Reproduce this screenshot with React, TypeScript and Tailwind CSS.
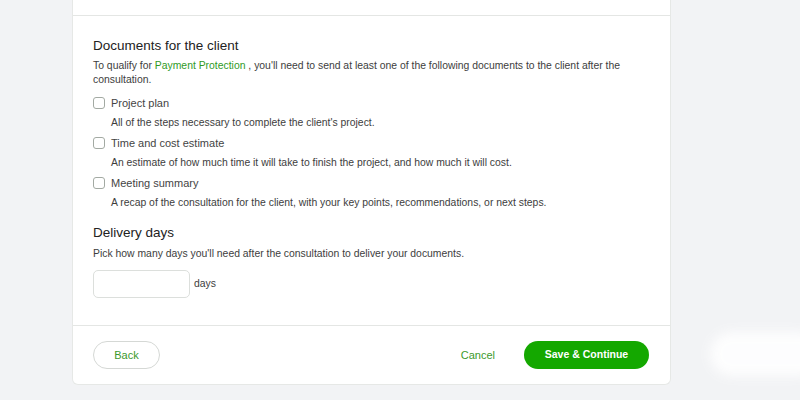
import React from "react";

const font = { fontFamily: '"Liberation Sans", Arial, sans-serif' };

function Check() {
  return <span className="w-[12px] h-[12px] rounded-[3px] border border-[#a3aaa3] bg-white shrink-0" />;
}

function Item({ title, desc }: { title: string; desc: string }) {
  return (
    <div className="flex flex-col">
      <div className="flex items-center gap-[6px] h-[20px]">
        <Check />
        <span className="text-[11px] text-[#444]">{title}</span>
      </div>
      <div className="pl-[18px] text-[10.4px] text-[#3d3d3d] h-[20px] flex items-center">{desc}</div>
    </div>
  );
}

export default function App() {
  return (
    <div className="relative w-[800px] h-[400px] bg-[#f2f3f5] overflow-hidden" style={font}>
      <div className="absolute right-[-20px] top-[332px] w-[110px] h-[44px] rounded-full bg-white blur-[6px] opacity-90" />
      <div className="ml-[72px] w-[599px] h-[385px] bg-white border-x border-b border-[#e6e8e6] rounded-b-[6px] flex flex-col">
        <div className="h-[16px] border-b border-[#e4e6e4]" />
        <div className="pl-[20px] pr-[21px] pt-[21px] h-[310px] border-b border-[#e4e6e4]">
          <h2 className="text-[13.5px] text-[#222] leading-[18px]">Documents for the client</h2>
          <p className="mt-[4px] text-[10.4px] leading-[14px] text-[#3d3d3d]">
            To qualify for <span className="text-[#2f9a1f]">Payment Protection</span> , you'll need to send at least one of the following documents to the client after the consultation.
          </p>
          <div className="mt-[6px] flex flex-col">
            <Item title="Project plan" desc="All of the steps necessary to complete the client's project." />
            <Item title="Time and cost estimate" desc="An estimate of how much time it will take to finish the project, and how much it will cost." />
            <Item title="Meeting summary" desc="A recap of the consultation for the client, with your key points, recommendations, or next steps." />
          </div>
          <h2 className="mt-[11px] text-[13.5px] text-[#222] leading-[18px]">Delivery days</h2>
          <p className="mt-[5px] text-[10.4px] leading-[14px] text-[#3d3d3d]">Pick how many days you'll need after the consultation to deliver your documents.</p>
          <div className="mt-[9px] flex items-center gap-[4px]">
            <div className="w-[97px] h-[28px] border border-[#dcdfdc] rounded-[5px]" />
            <span className="text-[10.4px] text-[#3d3d3d]">days</span>
          </div>
        </div>
        <div className="flex-1 flex items-center pl-[20px] pr-[21px]">
          <button className="w-[67px] h-[28px] rounded-full border border-[#d5d8d5] text-[11px] text-[#3c9a2c]">Back</button>
          <div className="flex-1" />
          <button className="text-[11px] text-[#3c9a2c] mr-[29px]">Cancel</button>
          <button className="w-[125px] h-[28px] rounded-full bg-[#14a800] text-white text-[10.5px] font-bold">Save &amp; Continue</button>
        </div>
      </div>
    </div>
  );
}
